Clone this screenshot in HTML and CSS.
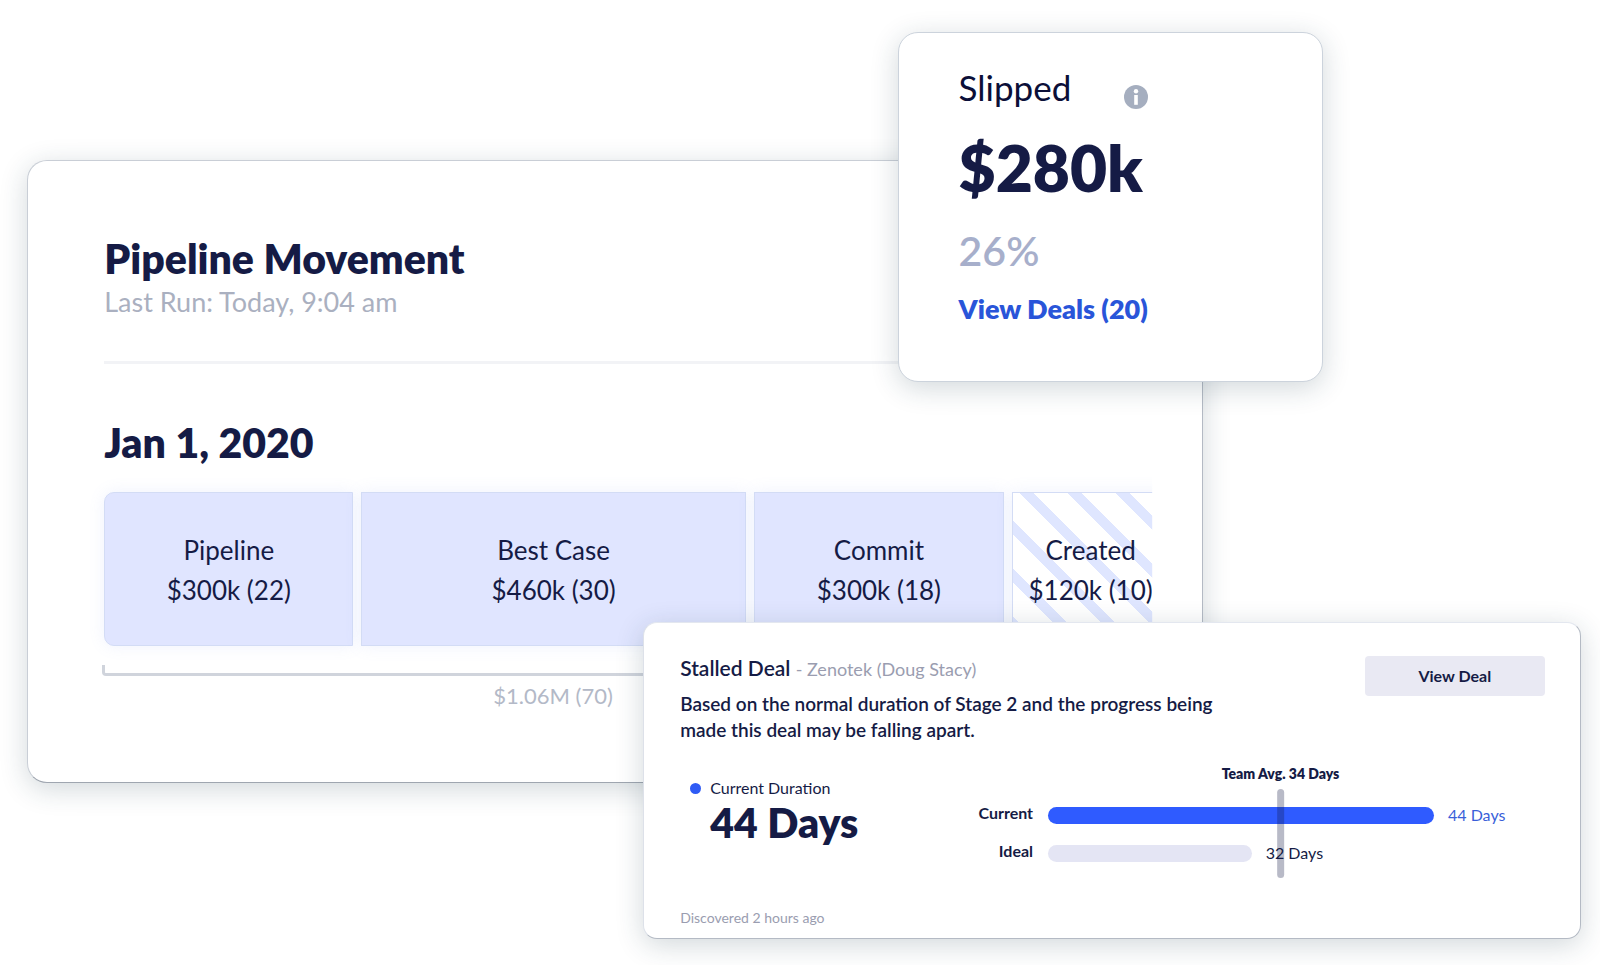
FILE: index.html
```html
<!DOCTYPE html>
<html lang="en">
<head>
<meta charset="utf-8">
<title>Pipeline Movement</title>
<meta name="viewport" content="width=device-width, initial-scale=1">
<link rel="stylesheet" href="styles.css">
</head>
<body>
<main class="board">
  <section class="card pipeline">
    <h1 class="heading">Pipeline Movement</h1>
    <p class="last-run">Last Run: Today, 9:04 am</p>
    <hr class="divider">
    <h2 class="heading">Jan 1, 2020</h2>
    <div class="stages">
      <div class="stage stage-first"><span>Pipeline</span><span>$300k (22)</span></div>
      <div class="stage"><span>Best Case</span><span>$460k (30)</span></div>
      <div class="stage"><span>Commit</span><span>$300k (18)</span></div>
      <div class="stage stage-created"><span>Created</span><span>$120k (10)</span></div>
      <div class="total">
        <div class="bracket"></div>
        <span class="total-label">$1.06M (70)</span>
      </div>
    </div>
  </section>

  <section class="card slipped">
    <div class="slipped-body">
      <div class="slipped-top">
        <h2 class="slipped-title">Slipped</h2>
        <svg class="info" viewBox="0 0 24 24" role="img" aria-label="Info">
          <circle cx="12" cy="12" r="12" fill="#a5aebf"/>
          <circle cx="12" cy="6.2" r="2.2" fill="#fff"/>
          <rect x="10.2" y="10" width="3.6" height="9.8" fill="#fff"/>
        </svg>
      </div>
      <strong class="amount">$280k</strong>
      <span class="percent">26%</span>
      <a class="deals-link" href="#">View Deals (20)</a>
    </div>
  </section>

  <section class="card stalled">
    <header class="stalled-head">
      <div class="stalled-copy">
        <h2 class="stalled-title">Stalled Deal <span class="deal-name">- Zenotek (Doug Stacy)</span></h2>
        <p class="reason">Based on the normal duration of Stage 2 and the progress being made this deal may be falling apart.</p>
      </div>
      <button class="view-deal" type="button">View Deal</button>
    </header>
    <div class="details">
      <div class="duration">
        <span class="dot"></span>
        <span class="duration-label">Current Duration</span>
        <strong class="duration-value">44 Days</strong>
      </div>
      <div class="chart">
        <div class="chart-labels"><span>Current</span><span>Ideal</span></div>
        <div class="plot">
          <div class="row row-current"><span class="bar" style="width:77.7%"></span><span>44 Days</span></div>
          <div class="row row-ideal"><span class="bar" style="width:41%"></span><span>32 Days</span></div>
          <div class="marker" style="left:46.8%"><span class="marker-label">Team Avg. 34 Days</span><span class="marker-line"></span></div>
        </div>
      </div>
    </div>
    <footer class="discovered">Discovered 2 hours ago</footer>
  </section>
</main>
</body>
</html>
```
FILE: styles.css
```css
* { box-sizing: border-box; }

body {
  margin: 0;
  background: #fff;
  color: #151b45;
  font-family: Lato, "Open Sans", sans-serif;
}

h1, h2, p { margin: 0; }

.board {
  position: relative;
  min-height: 965px;
  overflow: hidden;
}

/* Overlapping cards on the board */
.card {
  position: absolute;
  background: #fff;
  border: 1px solid #ccd3dc;
  border-radius: 20px;
  box-shadow: 0 6px 28px rgba(30, 60, 75, .2);
}

.pipeline {
  left: 1.7%;
  top: 160px;
  width: 73.5%;
  padding: 75px 50px 72px 76px;
  border-color: #c9ced6 #b4bac4 #9fa6b0 #c9ced6;
}

.heading {
  font-size: 41px;
  line-height: 46px;
  font-weight: 800;
}

.last-run {
  margin-top: 4px;
  font-size: 27px;
  line-height: 32px;
  color: #aab0c0;
}

.divider {
  height: 3px;
  margin: 43px 0 56px;
  border: 0;
  background: #f2f3f6;
}

.stages {
  display: grid;
  grid-template-columns: 249fr 384fr 250fr 157fr;
  column-gap: 8px;
  row-gap: 19px;
  width: calc(100% + 17px);
  margin-top: 26px;
  clip-path: inset(-24px 17px -24px -24px);
}

.stage {
  display: flex;
  flex-direction: column;
  align-items: center;
  padding: 37px 0 35px;
  border: 1px solid #d3dcf5;
  background: #e0e5ff;
  box-shadow: 0 0 16px rgba(120, 150, 240, .12);
  font-size: 26px;
  line-height: 40px;
  white-space: nowrap;
}

.stage-first { border-radius: 10px 0 0 10px; }

.stage-created {
  background: repeating-linear-gradient(45deg, #fff 0 10px, #dfe6ff 10px 20px, #fff 20px 34px);
}

.total {
  grid-column: 1 / 4;
  display: flex;
  flex-direction: column;
  align-items: center;
  margin-left: -2px;
}

.bracket {
  align-self: stretch;
  height: 11px;
  border: 3px solid #d0d4dc;
  border-top: 0;
  border-radius: 0 0 4px 4px;
}

.total-label {
  margin-top: 6px;
  font-size: 22px;
  line-height: 28px;
  color: #b3b9c7;
}

.slipped {
  left: 56.1%;
  top: 32px;
  width: 26.6%;
  padding: 34px 60px 56px;
}

.slipped-body {
  display: flex;
  flex-direction: column;
  width: fit-content;
}

.slipped-top {
  display: flex;
  align-items: flex-start;
  justify-content: space-between;
}

.slipped-title {
  font-size: 35px;
  line-height: 40px;
  font-weight: 400;
  color: #0b0f38;
}

.info {
  width: 24px;
  height: 24px;
  margin-top: 18px;
}

.amount {
  margin-top: 23px;
  font-size: 64px;
  line-height: 72px;
  font-weight: 800;
}

.percent {
  margin-top: 23px;
  font-size: 41px;
  line-height: 48px;
  font-weight: 600;
  color: #a7afcb;
}

.deals-link {
  margin-top: 18px;
  font-size: 27px;
  line-height: 32px;
  font-weight: 800;
  color: #2955d9;
  text-decoration: none;
}

.stalled {
  left: 40.2%;
  top: 622px;
  width: 58.6%;
  padding: 33px 35px 11px 36px;
  border-color: #e3e7ef #b4bac4 #b4bac4 #dde1e9;
  border-radius: 14px;
}

.stalled-head {
  display: flex;
  justify-content: space-between;
  align-items: flex-start;
}

.stalled-copy { flex: 0 1 560px; }

.stalled-title {
  font-size: 21px;
  line-height: 24px;
  font-weight: 600;
}

.deal-name {
  font-size: 18px;
  line-height: 20px;
  font-weight: 400;
  color: #9a9db0;
}

.reason {
  margin-top: 11px;
  font-size: 19px;
  line-height: 26px;
  font-weight: 600;
}

.view-deal {
  width: 180px;
  height: 40px;
  border: 0;
  border-radius: 4px;
  background: #e9e9f3;
  color: #151b45;
  font: 700 16px/20px Lato, "Open Sans", sans-serif;
}

.details {
  display: grid;
  grid-template-columns: 297fr 568fr;
  margin-top: 23px;
}

.duration {
  display: grid;
  grid-template-columns: 11px 1fr;
  column-gap: 9px;
  align-content: start;
  align-items: center;
  padding: 12px 0 0 10px;
}

.dot {
  height: 11px;
  border-radius: 50%;
  background: #2f5bf5;
}

.duration-label {
  font-size: 16px;
  line-height: 20px;
}

.duration-value {
  grid-column: 2;
  font-size: 41px;
  line-height: 50px;
  font-weight: 800;
}

.chart {
  display: grid;
  grid-template-columns: 56px 1fr;
  column-gap: 15px;
}

.chart-labels,
.plot {
  display: grid;
  grid-auto-rows: 20px;
  row-gap: 18px;
  padding: 39px 0 15px;
}

.chart-labels {
  font-size: 16px;
  line-height: 16px;
  font-weight: 700;
  text-align: right;
}

.plot { position: relative; }

.row {
  display: flex;
  align-items: center;
  gap: 14px;
  font-size: 16px;
  line-height: 20px;
}

.bar {
  height: 17px;
  border-radius: 9px;
}

.row-current { color: #3a5fd9; }
.row-current .bar { background: #2f5bff; }
.row-ideal .bar { background: #e4e5f4; }

/* Team average, drawn across the bars */
.marker {
  position: absolute;
  top: 0;
  bottom: 0;
  display: flex;
  flex-direction: column;
  align-items: center;
  gap: 7px;
  transform: translateX(-50%);
}

.marker-label {
  font-size: 14px;
  line-height: 16px;
  font-weight: 800;
  white-space: nowrap;
}

.marker-line {
  flex: 1;
  width: 7px;
  border-radius: 4px;
  background: rgba(21, 27, 69, .3);
}

.discovered {
  margin-top: 31px;
  font-size: 14px;
  line-height: 18px;
  color: #9a9db0;
}
```
